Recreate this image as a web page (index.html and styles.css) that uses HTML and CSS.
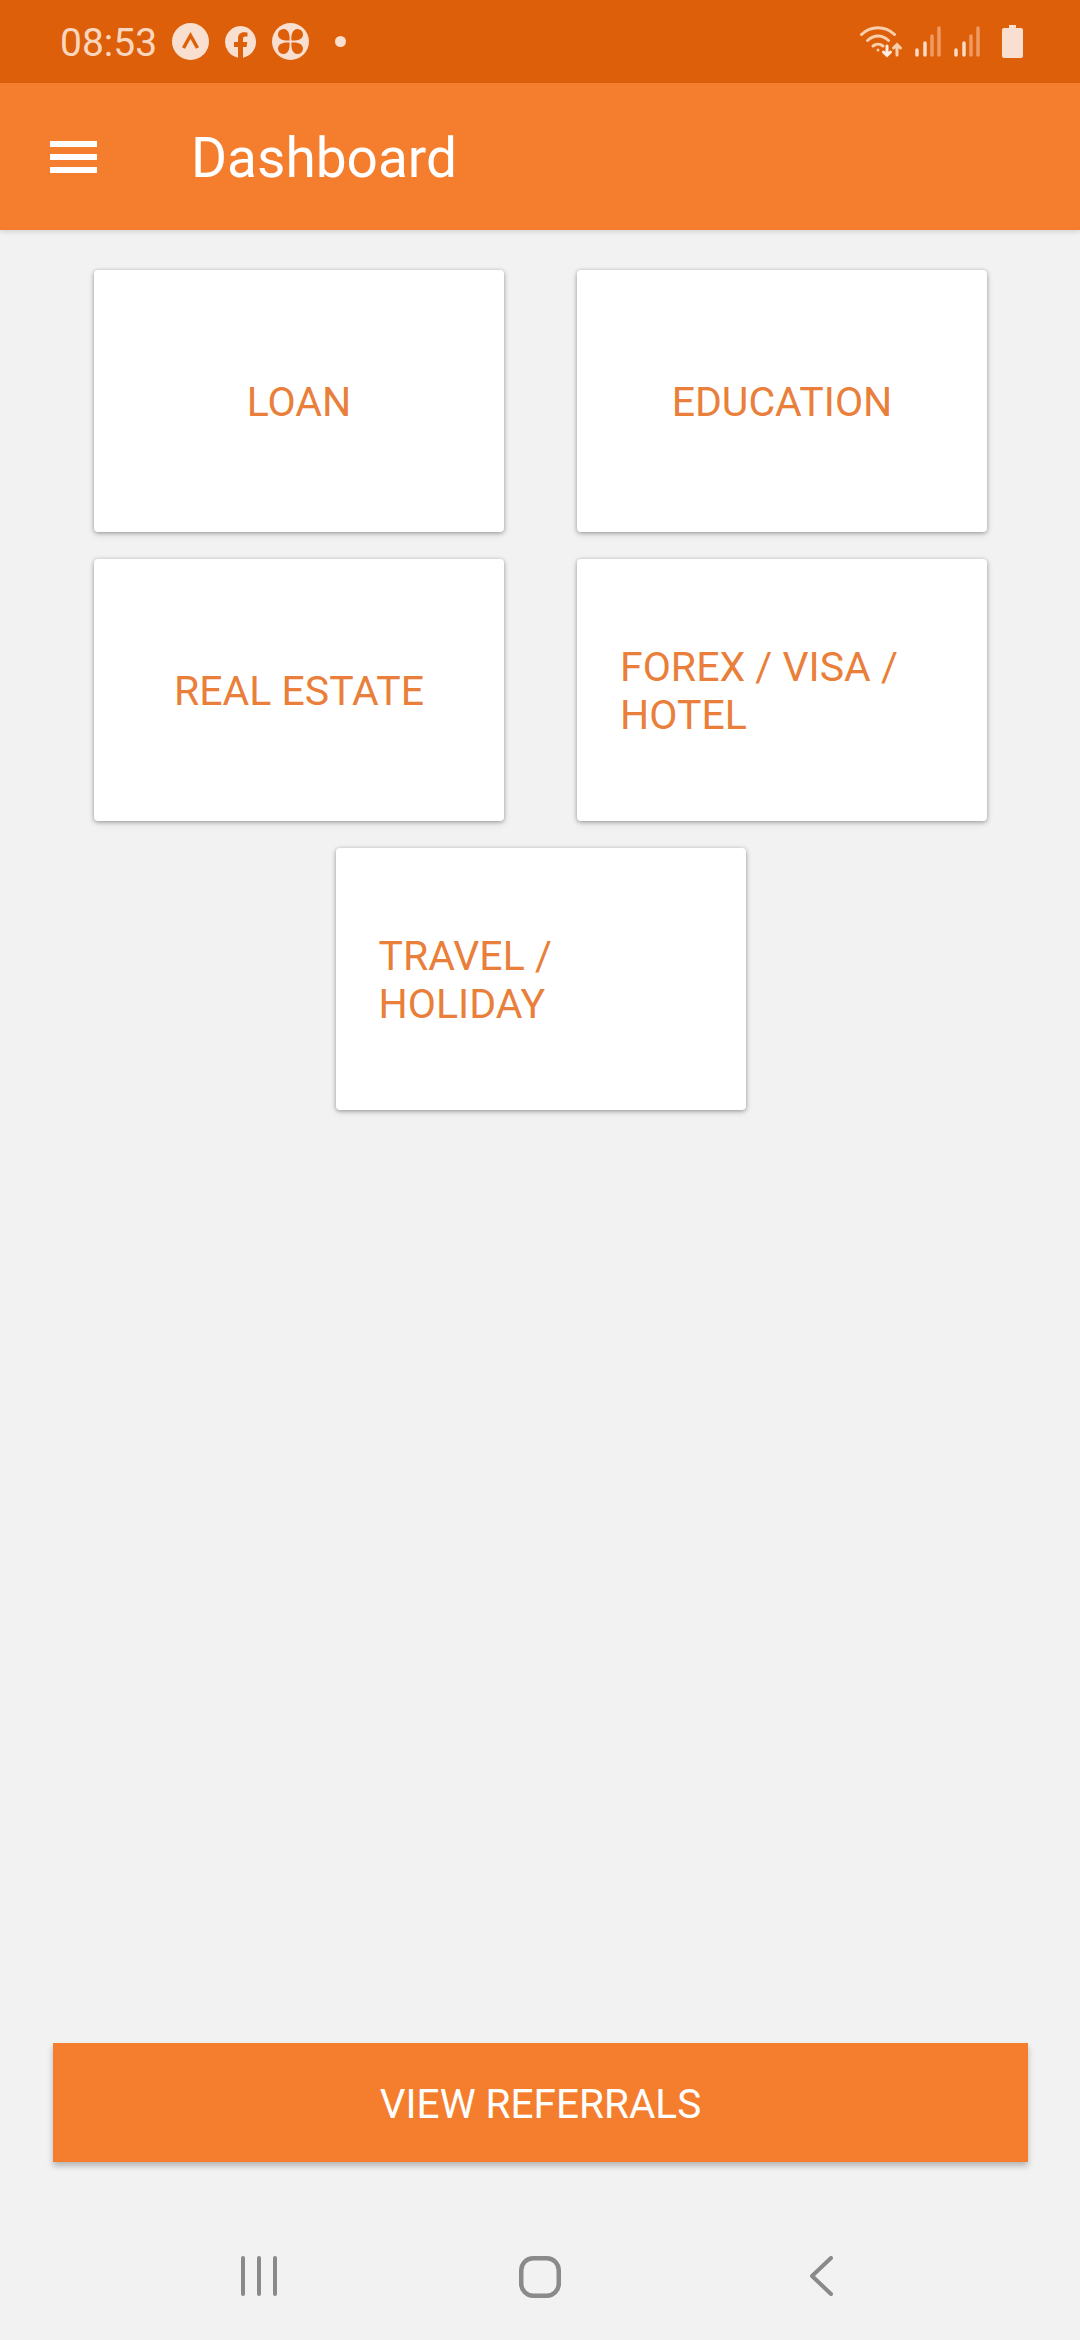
FILE: index.html
```html
<!DOCTYPE html>
<html lang="en">
<head>
    <meta charset="UTF-8">
    <meta name="viewport" content="width=device-width, initial-scale=1.0">
    <title>Dashboard</title>
    <link rel="stylesheet" href="styles.css">
</head>
<body>
    <div class="status-bar">
        <span class="time">08:53</span>
        <svg class="icon-a" width="37" height="37" viewBox="0 0 37 37">
            <circle cx="18.5" cy="18.5" r="18.5" fill="#f8dfcf"/>
            <path d="M11.5 25 L18.5 12.5 L25.5 25" fill="none" stroke="#de5f0a" stroke-width="3.500"/>
        </svg>
        <svg class="icon-fb" width="32" height="32" viewBox="0 0 32 32">
            <path d="M16 0a16 16 0 0 0-3 31.700V21H9v-5h4v-3.500c0-4 2.400-6.200 6-6.200 1.700 0 3.500.3 3.500.3v4h-2c-2 0-2.500 1.200-2.500 2.500V16h4.300l-.7 5H18v10.700A16 16 0 0 0 16 0z" fill="#f8dfcf"/>
        </svg>
        <svg class="icon-flower" width="37" height="37" viewBox="0 0 37 37">
            <circle cx="18.500" cy="18.500" r="18.500" fill="#f8dfcf"/>
            <path d="M17.500 17.500C13 18 6 17 6 11.500A5.500 5.500 0 0 1 11.500 6C17 6 18 13 17.500 17.500Z" fill="#de5f0a"/>
            <path d="M19.500 17.500C24 18 31 17 31 11.500A5.500 5.500 0 0 0 25.500 6C20 6 19 13 19.500 17.500Z" fill="#de5f0a"/>
            <path d="M17.500 19.500C13 19 6 20 6 25.500A5.500 5.500 0 0 0 11.500 31C17 31 18 24 17.500 19.500Z" fill="#de5f0a"/>
            <path d="M19.500 19.500C24 19 31 20 31 25.500A5.500 5.500 0 0 1 25.500 31C20 31 19 24 19.500 19.500Z" fill="#de5f0a"/>
        </svg>
        <span class="status-dot"></span>
        <span class="status-spacer"></span>
        <svg class="icon-wifi" width="43" height="32" viewBox="0 0 43 32" fill="none" stroke="#f9cfae" stroke-width="3" stroke-linecap="round">
            <path d="M1.500 8.500C11 -.5 25 -.5 34.500 8.500"/>
            <path d="M7.500 14.500C14 8.500 22 8.500 28.500 14.500"/>
            <path d="M13 20c3-2.500 7-2.500 10 0"/>
            <circle cx="18" cy="24" r="1.500" fill="#f9cfae" stroke="none"/>
            <path d="M27 20v9M23.500 26l3.500 3.500 3.500-3.500" stroke="#fdeee3"/>
            <path d="M37 29v-10M33.500 22l3.500-3.500 3.500 3.500"/>
        </svg>
        <svg class="icon-signal" width="27" height="31" viewBox="0 0 27 31" fill="none" stroke-width="3.500" stroke-linecap="round">
            <path d="M3 24v5M11 17v12" stroke="#f9dcc6"/>
            <path d="M18 10v19M25 2v27" stroke="#ee9a62"/>
        </svg>
        <svg class="icon-signal" width="27" height="31" viewBox="0 0 27 31" fill="none" stroke-width="3.500" stroke-linecap="round">
            <path d="M3 24v5M11 17v12" stroke="#f9dcc6"/>
            <path d="M18 10v19M25 2v27" stroke="#ee9a62"/>
        </svg>
        <svg class="icon-battery" width="21" height="33" viewBox="0 0 21 33">
            <path d="M7 0h7v3h5a2 2 0 0 1 2 2v26a2 2 0 0 1-2 2H2a2 2 0 0 1-2-2V5a2 2 0 0 1 2-2h5z" fill="#f8dfcf"/>
        </svg>
    </div>

    <header class="app-bar">
        <div class="menu-icon"><span></span><span></span><span></span></div>
        <h1 class="app-title">Dashboard</h1>
    </header>

    <main class="content">
        <div class="card-grid">
            <div class="card"><span>LOAN</span></div>
            <div class="card"><span>EDUCATION</span></div>
            <div class="card"><span>REAL ESTATE</span></div>
            <div class="card card-multi"><span>FOREX / VISA /<br>HOTEL</span></div>
            <div class="card card-multi"><span>TRAVEL /<br>HOLIDAY</span></div>
        </div>
        <button class="referrals-btn" type="button">VIEW REFERRALS</button>
    </main>

    <nav class="nav-bar">
        <div class="nav-cell">
            <svg width="36" height="40" viewBox="0 0 36 40" fill="none" stroke="#8a8a8a" stroke-width="4" stroke-linecap="round">
                <path d="M2 2v36M18 2v36M34 2v36"/>
            </svg>
        </div>
        <div class="nav-cell">
            <svg width="42" height="42" viewBox="0 0 42 42" fill="none" stroke="#8a8a8a" stroke-width="4.500">
                <rect x="2.250" y="2.250" width="37.500" height="37.500" rx="12"/>
            </svg>
        </div>
        <div class="nav-cell">
            <svg width="23" height="40" viewBox="0 0 23 40" fill="none" stroke="#8a8a8a" stroke-width="4" stroke-linecap="round" stroke-linejoin="round">
                <path d="M21 2L2 20l19 18"/>
            </svg>
        </div>
    </nav>
</body>
</html>
```

FILE: styles.css
```css
* { box-sizing: border-box; }
html, body { margin: 0; padding: 0; }
body { width: 1080px; height: 2340px; display: flex; flex-direction: column; background-color: #f2f2f2; font-family: Roboto, sans-serif; }

.status-bar { height: 83px; flex-shrink: 0; display: flex; align-items: center; padding: 0 57px 0 60px; background-color: #de5f0a; }
.status-bar svg { display: block; flex-shrink: 0; }
.time { width: 112px; padding-top: 2px; font-size: 39px; color: #f9d6bd; }
.icon-fb { margin-left: 16px; }
.icon-flower { margin-left: 15px; }
.status-dot { width: 11px; height: 11px; margin-left: 26px; border-radius: 50%; background-color: #f8dfcf; }
.status-spacer { flex: 1; }
.icon-signal { margin-left: 11px; }
.icon-signal + .icon-signal { margin-left: 12px; }
.icon-battery { margin-left: 22px; }

.app-bar { height: 147px; flex-shrink: 0; display: flex; align-items: center; padding-left: 50px; background-color: #f57e2e; box-shadow: 0 2px 5px rgba(0, 0, 0, 0.12); position: relative; }
.menu-icon { width: 47px; display: flex; flex-direction: column; gap: 7px; }
.menu-icon span { height: 6px; background-color: #fff; }
.app-title { margin: 0 0 0 94px; padding-top: 3px; font-size: 55px; font-weight: 400; color: #fff; }

.content { flex: 1; display: flex; flex-direction: column; padding: 40px 52px 0 53px; }
.card-grid { flex: 1; display: flex; flex-wrap: wrap; justify-content: center; align-content: flex-start; gap: 27px 73px; }
.card { width: 410px; height: 262px; display: flex; align-items: center; justify-content: center; padding: 2px 43px 0; background-color: #fff; border-radius: 4px; box-shadow: 0 1px 4px rgba(0, 0, 0, 0.35), 0 3px 8px rgba(0, 0, 0, 0.08); font-size: 41px; line-height: 48px; color: #e97f3a; }
.card-multi { justify-content: flex-start; }

.referrals-btn { height: 119px; flex-shrink: 0; padding: 2px 0 0; border: none; border-radius: 0; background-color: #f57e2e; color: #fff; font-family: Roboto, sans-serif; font-size: 40.5px; box-shadow: 0 4px 6px rgba(0, 0, 0, 0.25); }

.nav-bar { height: 178px; flex-shrink: 0; display: flex; justify-content: center; padding-top: 94px; }
.nav-cell { width: 281px; display: flex; justify-content: center; align-items: flex-start; }
.nav-cell svg { display: block; }
```
